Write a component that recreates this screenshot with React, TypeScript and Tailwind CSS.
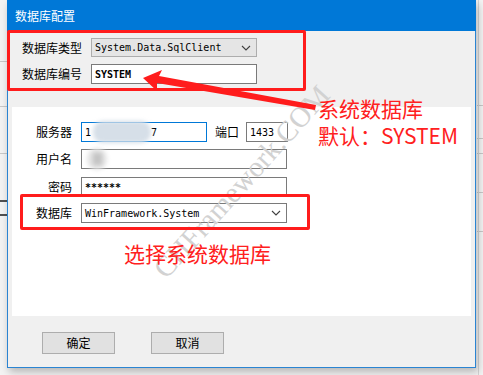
const cjk = "font-['Noto_Sans_CJK_SC','Microsoft_YaHei',sans-serif]";
const mono = "font-['DejaVu_Sans_Mono','Noto_Sans_CJK_SC',monospace] text-[10px] text-black";

function Chevron() {
  return (
    <svg width="10" height="6" viewBox="0 0 10 6" className="shrink-0">
      <polyline points="1,1 5,5 9,1" fill="none" stroke="#404040" strokeWidth="1.1" />
    </svg>
  );
}

function PanelRow({ label, className, children }: { label: string; className?: string; children: React.ReactNode }) {
  return (
    <div className={`flex items-center h-[20px] ${className ?? ''}`}>
      <div className="w-[60px] text-right text-[12px] text-black">{label}</div>
      <div className="ml-[9px] flex items-center">{children}</div>
    </div>
  );
}

export default function App() {
  return (
    <div className={`relative w-[483px] h-[375px] bg-[#f3f3f3] overflow-hidden ${cjk}`}>
      {/* app behind the dialog */}
      <div className="absolute left-0 top-[61px] w-[7px] h-px bg-[#c8c8c8]" />
      <div className="absolute left-0 top-[106px] w-[7px] h-px bg-[#c8c8c8]" />
      <div className="absolute left-0 top-[153px] w-[7px] h-px bg-[#c8c8c8]" />
      <div className="absolute left-0 top-[200px] w-[7px] h-px bg-[#c8c8c8]" />
      <div className="absolute left-0 top-[200px] w-[7px] h-[16px] border-y-2 border-[#505050]" />
      <div className="absolute left-[477px] top-[105px] w-[6px] h-px bg-[#c8c8c8]" />
      <div className="absolute left-[477px] top-[138px] w-[6px] h-px bg-[#c8c8c8]" />
      <div className="absolute left-[477px] top-[153px] w-[6px] h-px bg-[#c8c8c8]" />
      <div className="absolute left-[477px] top-[192px] w-[6px] h-px bg-[#c8c8c8]" />
      <div className="absolute left-[477px] top-[231px] w-[6px] h-px bg-[#c8c8c8]" />
      <div className="absolute left-[478px] top-0 w-px h-[375px] bg-[#d4d4d4]" />

      {/* dialog window */}
      <div className="relative ml-[7px] w-[469px] h-[368px] border-x border-b border-[#2a84d2] bg-[#f0f0f0] shadow-[2px_4px_8px_rgba(0,0,0,0.25)] flex flex-col">
        <div className="h-[31px] -mx-px bg-[#0078d7] text-white text-[12px] flex items-center pl-[8px]">
          数据库配置
        </div>

        <div className="h-[76px] pt-[7px] pl-[14px] flex flex-col gap-[7px]">
          <div className="flex items-center h-[19px]">
            <div className="w-[69px] text-[12px] text-black">数据库类型</div>
            <div className="w-[166px] h-[19px] border border-[#adadad] bg-[#e5e5e5] flex items-center justify-between pl-[3px] pr-[5px]">
              <span className={mono}>System.Data.SqlClient</span>
              <Chevron />
            </div>
          </div>
          <div className="flex items-center h-[20px]">
            <div className="w-[69px] text-[12px] text-black">数据库编号</div>
            <div className="w-[166px] h-[20px] border border-[#7a7a7a] bg-white flex items-center pl-[3px]">
              <span className={`${mono} font-semibold`}>SYSTEM</span>
            </div>
          </div>
        </div>

        <div className="ml-[4px] w-[459px] h-[209px] bg-white pt-[15px] flex flex-col">
          <PanelRow label="服务器">
            <div className="w-[126px] h-[20px] border border-[#0078d7] bg-white flex items-center pl-[3px]">
              <span className={mono}>1</span>
              <div className="w-[58px] h-[22px] ml-[2px] rounded-[10px] bg-[#d6dfe8] blur-[2px]" />
              <span className={mono}>7</span>
            </div>
            <div className="ml-[8px] text-[12px] text-black">端口</div>
            <div className="ml-[7px] w-[42px] h-[20px] border border-[#7a7a7a] bg-white flex items-center pl-[3px]">
              <span className={mono}>1433</span>
            </div>
          </PanelRow>
          <PanelRow label="用户名" className="mt-[7px]">
            <div className="w-[206px] h-[20px] border border-[#7a7a7a] bg-white flex items-center pl-[5px]">
              <div className="w-[20px] h-[22px] rounded-full bg-[#e4e4e4] blur-[2px] flex items-center justify-center">
                <div className="w-[9px] h-[12px] bg-[#c4c4c4]" />
              </div>
            </div>
          </PanelRow>
          <PanelRow label="密码" className="mt-[8px]">
            <div className="w-[206px] h-[20px] border border-[#7a7a7a] bg-white flex items-center pl-[3px]">
              <span className={`${mono} font-bold`}>******</span>
            </div>
          </PanelRow>
          <PanelRow label="数据库" className="mt-[6px]">
            <div className="w-[206px] h-[20px] border border-[#7a7a7a] bg-white flex items-center justify-between pl-[3px] pr-[5px]">
              <span className={mono}>WinFramework.System</span>
              <Chevron />
            </div>
          </PanelRow>
        </div>

        <div className="pt-[16px] pl-[34px] flex gap-[36px]">
          <button className="w-[73px] h-[22px] border border-[#adadad] bg-[#e1e1e1] text-[12px] text-black">确定</button>
          <button className="w-[73px] h-[22px] border border-[#adadad] bg-[#e1e1e1] text-[12px] text-black">取消</button>
        </div>
      </div>

      {/* watermark */}
      <div className="absolute left-[242px] top-[182px] -translate-x-1/2 -translate-y-1/2 rotate-[-48deg] whitespace-nowrap pointer-events-none font-['Liberation_Serif',serif] text-[29px] text-[#d2d2d2]">
        CHFramework.COM
      </div>

      {/* annotations */}
      <div className="absolute left-[7px] top-[30px] w-[299px] h-[61px] border-[3px] border-[#ff1c1c] rounded-[2px]" />
      <div className="absolute left-[20px] top-[194px] w-[290px] h-[36px] border-[3px] border-[#ff1c1c] rounded-[2px]" />
      <svg className="absolute left-0 top-0" width="483" height="375">
        <polygon points="143,78 162,70 159,76 316,105 315,110 157,83 157,91" fill="#ff1c1c" />
      </svg>
      <div className="absolute left-[318px] top-[96px] text-[21px] leading-[24px] text-[#ff2020]">系统数据库</div>
      <div className="absolute left-[318px] top-[123px] text-[21px] leading-[24px] text-[#ff2020]">默认：SYSTEM</div>
      <div className="absolute left-[124px] top-[241px] text-[21px] leading-[24px] text-[#ff2020]">选择系统数据库</div>
    </div>
  );
}
